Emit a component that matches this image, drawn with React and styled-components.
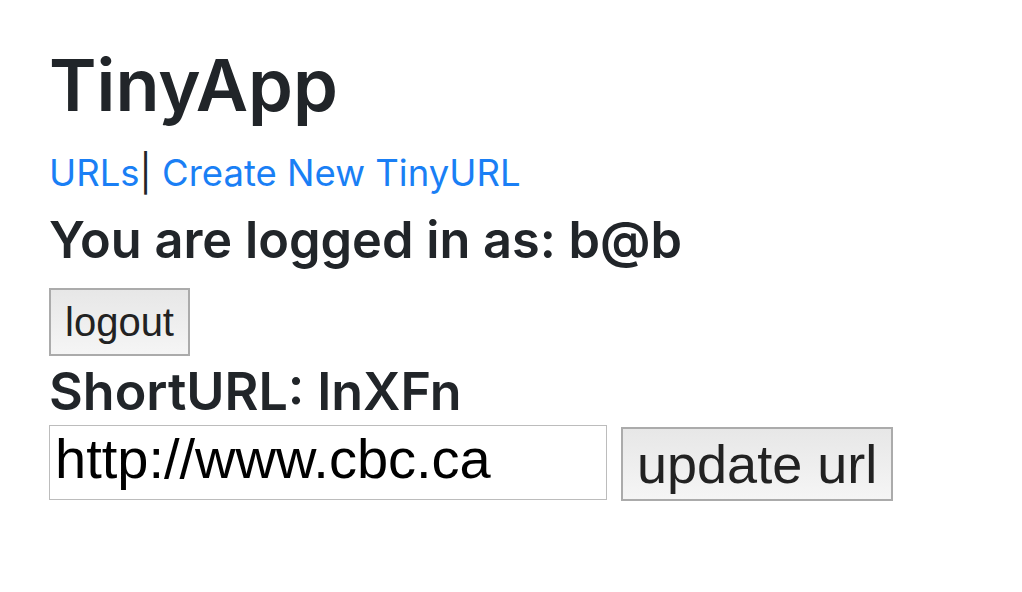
import React from "react";
import styled, { createGlobalStyle } from "styled-components";

const GlobalStyle = createGlobalStyle`
  html, body {
    margin: 0;
    padding: 0;
    background: #ffffff;
  }
  body {
    font-family: Inter, "Noto Sans", "Liberation Sans", sans-serif;
    color: #212529;
  }
  * { box-sizing: border-box; }
`;

const Page = styled.main`
  display: flex;
  flex-direction: column;
  align-items: flex-start;
  padding: 41px 0 0 49px;
`;

const Title = styled.h1`
  margin: 0;
  font-size: 72px;
  line-height: 88px;
  font-weight: 600;
  color: #212529;
`;

const Nav = styled.nav`
  margin-top: 22px;
  font-size: 36.5px;
  line-height: 44px;
  color: #212529;
`;

const NavLink = styled.a`
  color: #1a7ff5;
  text-decoration: none;
`;

const Heading = styled.h3`
  margin: ${(p) => p.$mt}px 0 0;
  font-size: ${(p) => p.$size}px;
  line-height: 58px;
  font-weight: 600;
  color: #212529;
`;

const Button = styled.button`
  font-family: "Liberation Sans", Arial, sans-serif;
  font-size: ${(p) => p.$size}px;
  height: ${(p) => p.$h}px;
  padding: 0 ${(p) => p.$pad}px;
  color: #222;
  white-space: nowrap;
  background: linear-gradient(#e7e7e7, #f5f5f5);
  border: 2px solid #ababab;
  border-radius: 0;
  line-height: 1;
`;

const LogoutButton = styled(Button)`
  margin-top: 19px;
`;

const FormRow = styled.form`
  display: flex;
  align-items: flex-start;
  gap: 14px;
  margin-top: 4px;
`;

const UrlInput = styled.input`
  width: 558px;
  height: 75px;
  padding: 0 0 8px 5px;
  font-family: "Liberation Sans", Arial, sans-serif;
  font-size: 56px;
  color: #000;
  border: 1px solid #bcbcbc;
  border-radius: 0;
  outline: none;
`;

const UpdateButton = styled(Button)`
  margin-top: 2px;
`;

export default function App() {
  return (
    <>
      <GlobalStyle />
      <Page>
        <Title>TinyApp</Title>
        <Nav>
          <NavLink href="#">URLs</NavLink>| <NavLink href="#">Create New TinyURL</NavLink>
        </Nav>
        <Heading $size={50.5} $mt={16}>You are logged in as: b@b</Heading>
        <LogoutButton $size={40} $h={68} $pad={14}>logout</LogoutButton>
        <Heading $size={52} $mt={7}>ShortURL: lnXFn</Heading>
        <FormRow onSubmit={(e) => e.preventDefault()}>
          <UrlInput defaultValue="http://www.cbc.ca" />
          <UpdateButton $size={54} $h={74} $pad={14}>update url</UpdateButton>
        </FormRow>
      </Page>
    </>
  );
}
